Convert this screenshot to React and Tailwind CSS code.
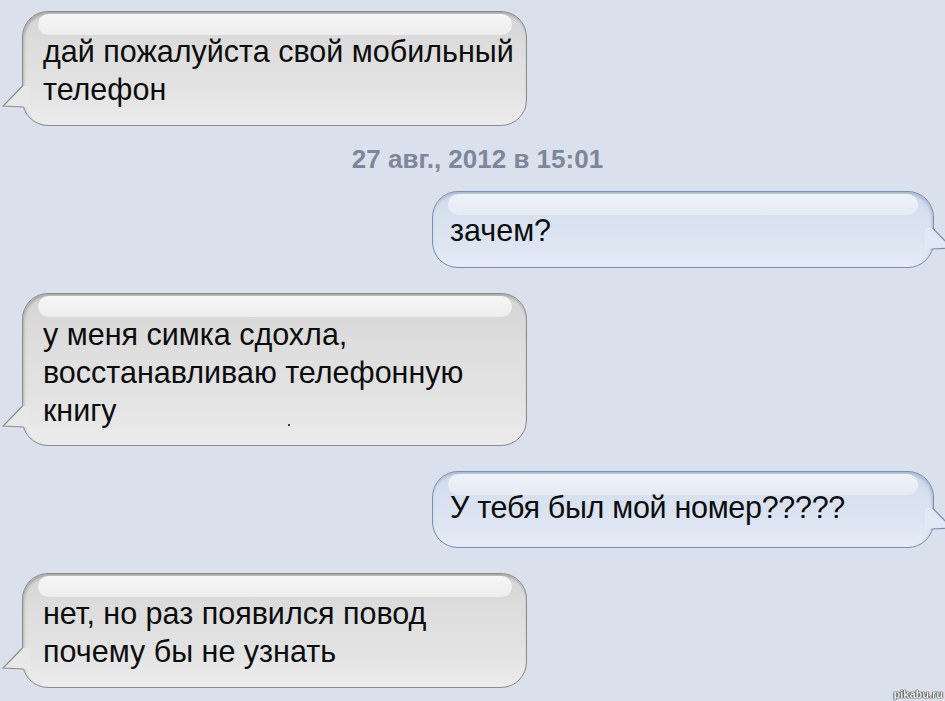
import React from "react";

const font = { fontFamily: '"Liberation Sans", Arial, sans-serif' };

function Tail({ left, fill, stroke }) {
  return (
    <svg
      className={`absolute bottom-[16px] h-[24px] w-[30px] ${left ? "left-[-21px]" : "right-[-20px] -scale-x-100"}`}
      viewBox="0 0 30 24"
    >
      <path d="M20.5 1 L1 21 L21.5 22 L28 22 L28 1 Z" fill={fill} />
      <path d="M20.5 1 L1 21 L21.5 22" fill="none" stroke={stroke} strokeWidth="1.2" />
    </svg>
  );
}

function Bubble({ left, box, lines, text = "", children }) {
  const body = left
    ? "ml-[22px] w-[505px] pl-[20px] border-[#8a8a8a] bg-[linear-gradient(to_bottom,#d4d4d4,#dedede_35%,#e3e3e3_70%,#ececec)] shadow-[inset_1px_2px_3px_rgba(0,0,0,0.22)]"
    : "ml-[432px] w-[502px] pl-[17px] border-[#7990b4] bg-[linear-gradient(to_bottom,#cfd9ea,#d8e1ef_35%,#dde5f2_70%,#e6ecf6)] shadow-[inset_-1px_2px_3px_rgba(40,60,100,0.22)]";
  const shine = left
    ? "left-[15px] right-[14px] bg-[linear-gradient(to_bottom,#f6f6f6,#ededed)]"
    : "left-[15px] right-[15px] bg-[linear-gradient(to_bottom,#eef2f9,#e5ebf4)]";
  return (
    <div className={`relative shrink-0 rounded-[26px] border ${body} ${box}`}>
      <div className={`absolute top-[2px] h-[21px] rounded-full ${shine}`} />
      {left ? (
        <Tail left fill="#e8e8e8" stroke="#8a8a8a" />
      ) : (
        <Tail fill="#e2e9f5" stroke="#7990b4" />
      )}
      <div className={`relative text-[30.5px] leading-[38px] text-[#0c0c0c] ${text}`}>
        {lines.map((l, i) => (
          <div key={i}>{l}</div>
        ))}
      </div>
      {children}
    </div>
  );
}

export default function App() {
  return (
    <div
      className="relative flex h-[701px] w-[945px] flex-col overflow-hidden bg-[#dbe1ec] pt-[11px]"
      style={font}
    >
      <Bubble
        left
        box="h-[115px] pt-[20px]"
        lines={["дай пожалуйста свой мобильный", "телефон"]}
      />
      <div className="flex h-[65px] shrink-0 items-center justify-center pl-[10px] pt-[2px] text-[26px] font-bold text-[#7d8799]">
        27 авг., 2012 в 15:01
      </div>
      <Bubble box="h-[77px] pt-[19px]" lines={["зачем?"]} />
      <div className="h-[25px] shrink-0" />
      <Bubble
        left
        box="h-[153px] pt-[21px]"
        lines={["у меня симка сдохла,", "восстанавливаю телефонную", "книгу"]}
      >
        <div className="absolute left-[265px] top-[130px] h-[2px] w-[2px] bg-[#444]" />
      </Bubble>
      <div className="h-[25px] shrink-0" />
      <Bubble
        box="h-[77px] pt-[16px]"
        text="tracking-[-0.3px]"
        lines={["У тебя был мой номер?????"]}
      />
      <div className="h-[25px] shrink-0" />
      <Bubble
        left
        box="h-[115px] pt-[20px]"
        lines={["нет, но раз появился повод", "почему бы не узнать"]}
      />
      <div className="absolute bottom-[1px] right-[2px] text-[11px] font-bold leading-none text-white [text-shadow:0_0_1px_#000,0_0_1px_#000,0_0_1px_#000]">
        pikabu.ru
      </div>
    </div>
  );
}
